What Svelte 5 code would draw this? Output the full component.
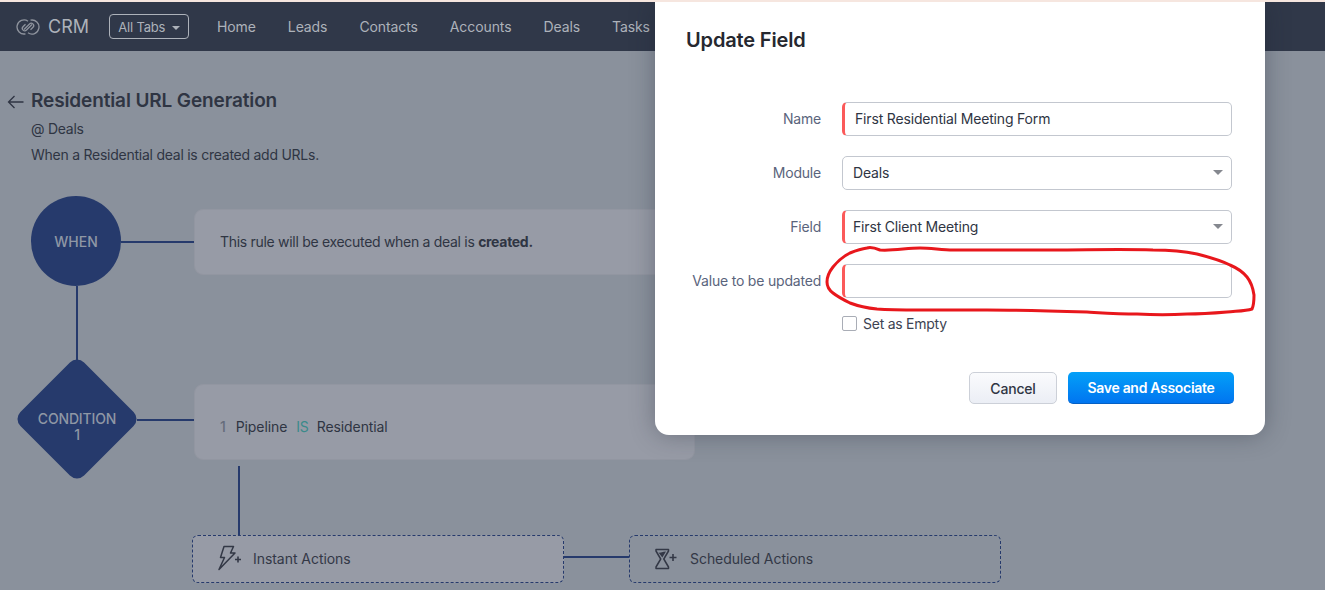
<script>
  const tabs = ["Home", "Leads", "Contacts", "Accounts", "Deals", "Tasks"];

  const fields = [
    { label: "Name", value: "First Residential Meeting Form", required: true, select: false },
    { label: "Module", value: "Deals", required: false, select: true },
    { label: "Field", value: "First Client Meeting", required: true, select: true },
    { label: "Value to be updated", value: "", required: true, select: false },
  ];
</script>

<div class="page">
  <header class="topbar">
    <div class="brand">
      <svg width="24" height="16" viewBox="0 0 24 16" fill="none" stroke="#8f949e" stroke-width="1.3">
        <path d="M12 2.200A7 7 0 1 0 9.500 14.800" />
        <path d="M12 13.800A7 7 0 1 0 14.500 1.200" />
        <path d="M8 10.500l5.500-5.500a2.400 2.400 0 0 1 3.500 3.300l-2.500 2.500" />
        <path d="M16 5.500l-5.500 5.500a2.400 2.400 0 0 1 -3.500 -3.300l2.500 -2.500" />
      </svg>
      <span>CRM</span>
    </div>
    <button class="all-tabs">All Tabs <i class="caret"></i></button>
    <nav>
      {#each tabs as tab}
        <span>{tab}</span>
      {/each}
    </nav>
  </header>

  <section class="rule-head">
    <h1>
      <svg width="18" height="14" viewBox="0 0 18 14" fill="none" stroke="currentColor" stroke-width="1.3">
        <path d="M16.500 7H1.500M7.500 1L1.500 7l6 6" />
      </svg>
      Residential URL Generation
    </h1>
    <p class="module">@ Deals</p>
    <p>When a Residential deal is created add URLs.</p>
  </section>

  <div class="diagram">
    <div class="node when">WHEN</div>
    <div class="wire" style="left:121px;top:241px;width:73px;height:2px"></div>
    <div class="card" style="top:209px;height:66px">
      <span>This rule will be executed when a deal is <b>created.</b></span>
    </div>
    <div class="wire" style="left:76px;top:286px;width:2px;height:76px"></div>
    <div class="node diamond"></div>
    <div class="diamond-label">CONDITION<br />1</div>
    <div class="wire" style="left:137px;top:419px;width:57px;height:2px"></div>
    <div class="card cond" style="top:384px;height:76px">
      <span class="num">1</span><span>Pipeline</span><span class="is">IS</span><span>Residential</span>
    </div>
    <div class="wire" style="left:238px;top:466px;width:2px;height:70px"></div>
    <div class="action" style="left:192px">
      <svg width="24" height="26" viewBox="0 0 24 26" fill="none" stroke="currentColor" stroke-width="1.500" stroke-linejoin="round">
        <path d="M6 1.500h9.500l-3 6.500h4.500L1 24.500l5.500-12H2.500z" />
        <path d="M17 14.500h6M20 11.500v6" stroke-width="1.600" />
      </svg>
      <span>Instant Actions</span>
    </div>
    <div class="wire" style="left:564px;top:556px;width:65px;height:2px"></div>
    <div class="action later" style="left:629px">
      <svg width="24" height="22" viewBox="0 0 24 22" fill="none" stroke="currentColor" stroke-width="1.500" stroke-linejoin="round">
        <path d="M1 1.500h12.500v1.500L8.800 11l4.700 8v1.500H1V19l4.700-8L1 3z" />
        <path d="M3.500 4.500c2 .5 3-.5 7.500-1L7.300 9.500z" fill="currentColor" stroke="none" />
        <path d="M14.500 9.500h7M18 6v7" stroke-width="1.600" />
      </svg>
      <span>Scheduled Actions</span>
    </div>
  </div>

  <div class="modal">
    <h2>Update Field</h2>
    <form>
      {#each fields as f}
        <label for={f.label}>{f.label}</label>
        <div id={f.label} class="input" class:required={f.required} class:select={f.select}>
          <span>{f.value}</span>
          {#if f.select}<i class="arrow"></i>{/if}
        </div>
      {/each}
      <div class="empty">
        <span class="box"></span>
        <span>Set as Empty</span>
      </div>
    </form>
    <div class="buttons">
      <button class="cancel">Cancel</button>
      <button class="save">Save and Associate</button>
    </div>
  </div>

  <svg class="scribble" width="1325" height="590" viewBox="0 0 1325 590" fill="none" stroke="#e8171c" stroke-width="3" stroke-linecap="round" stroke-linejoin="round">
    <path d="M880 250C875 248 870 247 867 248C860 249 855 251 850 253C842 257 837 262 833 267C829 272 827 277 827 282C827 286 829 290 833 293C838 297 844 300 850 303C858 306 867 308 877 309C890 310 905 310 920 310C940 310 965 310 987 310C1020 310 1055 311 1087 312C1105 313 1120 314 1137 314C1155 315 1170 315 1187 314C1200 314 1215 313 1227 312C1237 311 1246 311 1252 309C1254 305 1254 300 1254 295C1253 288 1251 282 1247 277C1243 272 1237 268 1230 265C1220 260 1209 257 1197 254C1183 251 1168 250 1153 250C1120 249 1087 250 1053 250C1020 250 986 250 953 250C942 250 931 248 920 248C907 248 893 251 880 250Z" />
  </svg>
</div>

<style>
  :global(body) {
    margin: 0;
    overflow: hidden;
  }

  .page {
    position: relative;
    width: 1325px;
    height: 590px;
    box-sizing: border-box;
    border-top: 2px solid #f6e6df;
    background: #8a919c;
    overflow: hidden;
    font-family: Inter, "Liberation Sans", sans-serif;
    font-size: 14px;
    color: #2f3543;
  }

  .topbar {
    height: 49px;
    background: #303849;
    color: #adb2ba;
    display: flex;
    align-items: center;
    padding-left: 16px;
    box-sizing: border-box;
  }

  .brand {
    display: flex;
    align-items: center;
    gap: 8px;
    font-size: 18px;
    width: 93px;
  }

  .all-tabs {
    width: 80px;
    height: 25px;
    border: 1px solid #adb2ba;
    border-radius: 4px;
    background: none;
    color: inherit;
    font: inherit;
    font-size: 13px;
    letter-spacing: -0.2px;
    padding: 0;
    margin-right: 28px;
  }

  .caret {
    display: inline-block;
    border: 4px solid transparent;
    border-top-color: #adb2ba;
    border-bottom: 0;
    margin-left: 3px;
    vertical-align: 2px;
  }

  nav {
    display: flex;
    gap: 32px;
    letter-spacing: -0.1px;
  }

  .rule-head {
    padding: 38px 0 0 31px;
  }

  h1 {
    position: relative;
    margin: 0 0 7px;
    font-size: 19px;
    line-height: 24px;
    font-weight: 600;
    letter-spacing: -0.12px;
    color: #2f3543;
  }

  h1 svg {
    position: absolute;
    left: -24px;
    top: 6px;
  }

  .rule-head p {
    margin: 0 0 8px;
    line-height: 18px;
    letter-spacing: -0.25px;
  }

  .diagram {
    position: absolute;
    inset: -2px 0 0 0;
  }

  .wire {
    position: absolute;
    background: #263a6c;
  }

  .node {
    position: absolute;
    background: #263a6c;
  }

  .when {
    left: 31px;
    top: 196px;
    width: 90px;
    height: 90px;
    border-radius: 50%;
    display: grid;
    place-items: center;
    color: #8f97a5;
    font-weight: 500;
  }

  .diamond {
    left: 32px;
    top: 374px;
    width: 90px;
    height: 90px;
    border-radius: 10px;
    transform: rotate(45deg);
  }

  .diamond-label {
    position: absolute;
    left: 17px;
    top: 411px;
    width: 120px;
    text-align: center;
    line-height: 16px;
    color: #8f97a5;
    font-weight: 500;
    letter-spacing: -0.15px;
  }

  .card {
    position: absolute;
    left: 194px;
    width: 501px;
    box-sizing: border-box;
    background: #979ba6;
    border: 1px solid #9296a1;
    border-radius: 9px;
    padding: 0 0 2px 25px;
    display: flex;
    align-items: center;
    letter-spacing: -0.3px;
  }

  .cond {
    gap: 10px;
    padding-top: 8px;
    padding-bottom: 0;
    letter-spacing: -0.1px;
  }

  .num {
    color: #656c7b;
    font-weight: 500;
  }

  .is {
    margin: 0 -2px 0 -1px;
    color: #3b8a8a;
  }

  .action {
    position: absolute;
    top: 535px;
    width: 372px;
    height: 48px;
    box-sizing: border-box;
    border: 1px dashed #263a6c;
    border-radius: 6px;
    display: flex;
    align-items: center;
    padding: 0 0 2px 25px;
    gap: 11px;
    background: #979ba6;
    color: #333846;
    letter-spacing: -0.05px;
  }

  .later {
    background: none;
  }

  .later svg {
    margin-bottom: -1px;
  }

  .modal {
    position: absolute;
    left: 655px;
    top: 0;
    width: 610px;
    height: 433px;
    box-sizing: border-box;
    background: #fff;
    border-radius: 0 0 14px 14px;
    box-shadow: 0 0 24px rgba(30, 35, 50, 0.35);
  }

  h2 {
    margin: 0;
    padding: 26px 0 0 31px;
    font-size: 20px;
    line-height: 24px;
    font-weight: 600;
    letter-spacing: -0.15px;
    color: #26282f;
  }

  form {
    display: grid;
    grid-template-columns: 166px 390px;
    column-gap: 21px;
    row-gap: 20px;
    margin-top: 50px;
    align-items: center;
  }

  label {
    padding-bottom: 2px;
    text-align: right;
    color: #5a647c;
    letter-spacing: -0.2px;
  }

  .input {
    height: 34px;
    box-sizing: border-box;
    border: 1px solid #c3c7cf;
    border-radius: 5px;
    display: flex;
    align-items: center;
    justify-content: space-between;
    padding: 0 8px 2px 10px;
    color: #2f3543;
    letter-spacing: -0.17px;
  }

  .required {
    border-left: 3px solid #fb5a5a;
  }

  .required.select {
    padding-left: 8px;
  }

  .arrow {
    border: 5px solid transparent;
    border-top: 5px solid #85888f;
    border-bottom: 0;
  }

  .empty {
    grid-column: 2;
    display: flex;
    align-items: center;
    gap: 6px;
    margin-top: -3px;
    color: #3d4352;
    letter-spacing: -0.25px;
  }

  .box {
    width: 13px;
    height: 13px;
    border: 1px solid #a9adb6;
    border-radius: 2px;
  }

  .buttons {
    display: flex;
    justify-content: flex-end;
    gap: 11px;
    margin: 40px 31px 0 0;
  }

  .buttons button {
    height: 32px;
    border-radius: 5px;
    font: inherit;
    font-weight: 500;
    letter-spacing: -0.2px;
    padding: 0;
  }

  .cancel {
    width: 88px;
    border: 1px solid #ccd0d8;
    background: linear-gradient(#fafbfd, #ebeef5);
    color: #2f3543;
  }

  .buttons .save {
    width: 166px;
    border: 0;
    border-bottom: 1px solid #0560c4;
    background: linear-gradient(#03a0f8, #0175f0);
    color: #fff;
    font-weight: 600;
    letter-spacing: -0.3px;
  }

  .scribble {
    position: absolute;
    left: 0;
    top: -2px;
    pointer-events: none;
  }
</style>
